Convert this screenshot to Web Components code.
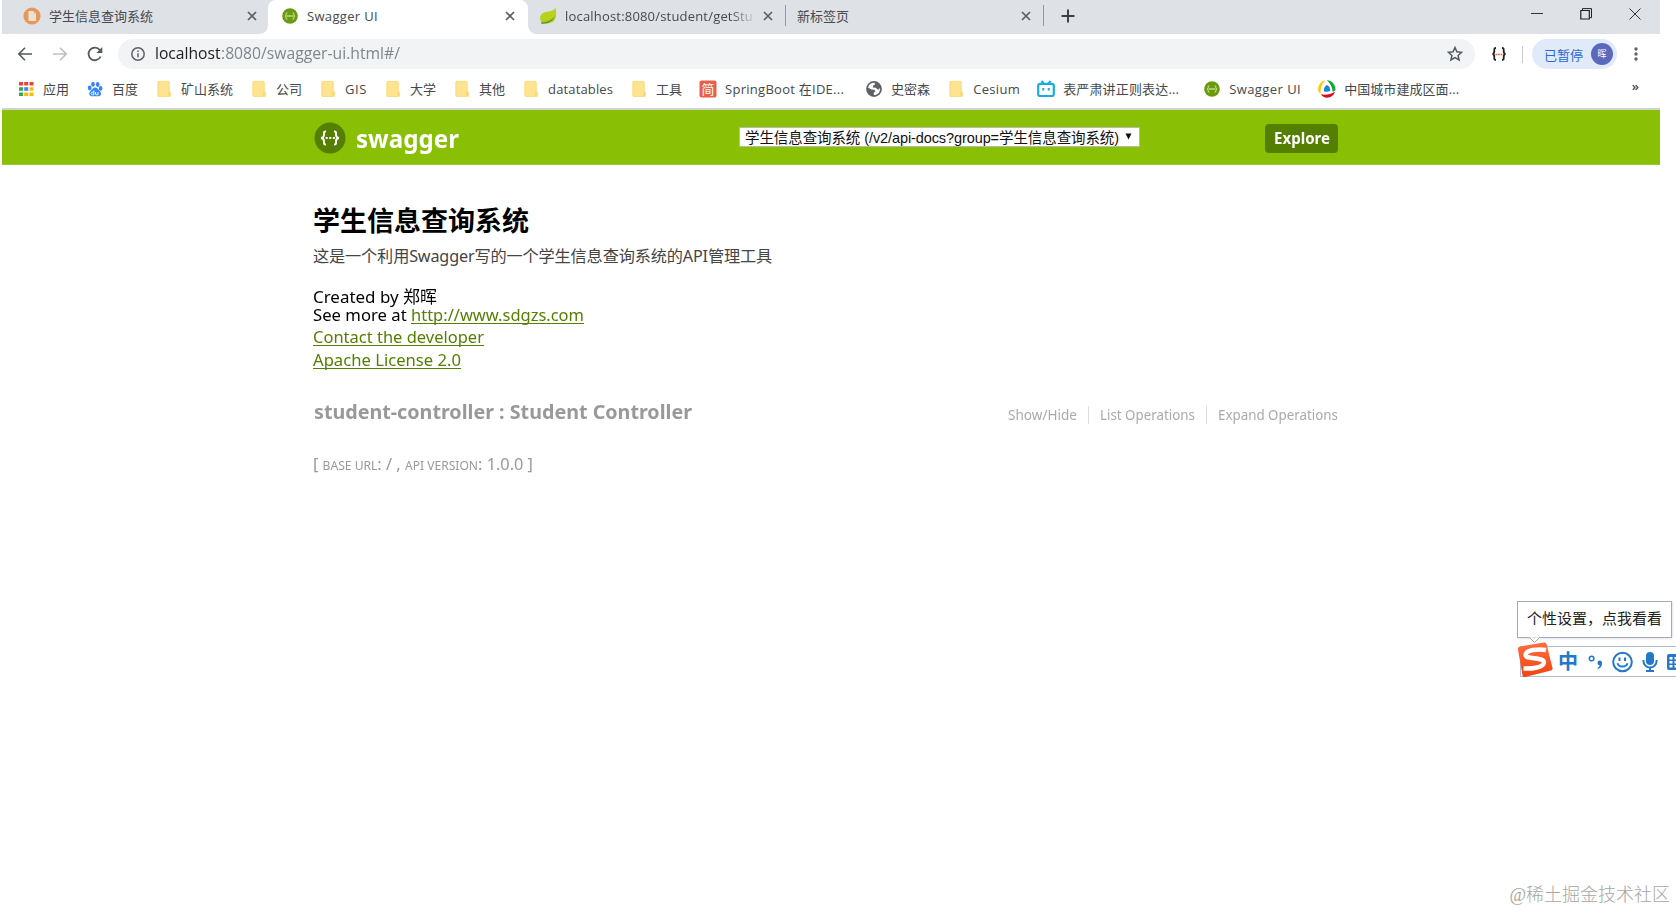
<!DOCTYPE html>
<html lang="zh-CN">
<head>
<meta charset="utf-8">
<title>Swagger UI</title>
<style>
  html, body { margin: 0; padding: 0; background: #fff; }
  body {
    width: 1676px; height: 912px; overflow: hidden; position: relative;
    font-family: "Open Sans", "Noto Sans CJK SC", sans-serif;
  }
  .window { width: 1658px; margin-left: 2px; }
</style>
</head>
<body>
<div class="window">
  <browser-tabs>
    <browser-tab style="width:266px" pad="21" label="学生信息查询系统" fit="104" icon="doc"></browser-tab>
    <browser-tab style="width:260px" pad="13" label="Swagger UI" fit="71" icon="swagger" active></browser-tab>
    <browser-tab style="width:258px" pad="11" label="localhost:8080/student/getStu" fit="188" icon="leaf" clipped></browser-tab>
    <browser-tab style="width:258px" pad="11" label="新标签页" fit="52"></browser-tab>
  </browser-tabs>
  <browser-toolbar></browser-toolbar>
  <bookmarks-bar>
    <bookmark-item icon="apps">应用</bookmark-item>
    <bookmark-item icon="baidu">百度</bookmark-item>
    <bookmark-item icon="folder">矿山系统</bookmark-item>
    <bookmark-item icon="folder">公司</bookmark-item>
    <bookmark-item icon="folder" fit="22">GIS</bookmark-item>
    <bookmark-item icon="folder">大学</bookmark-item>
    <bookmark-item icon="folder">其他</bookmark-item>
    <bookmark-item icon="folder" fit="65">datatables</bookmark-item>
    <bookmark-item icon="folder">工具</bookmark-item>
    <bookmark-item icon="jian" fit="119" style="margin-right:4px">SpringBoot 在IDE...</bookmark-item>
    <bookmark-item icon="globe">史密森</bookmark-item>
    <bookmark-item icon="folder" fit="47">Cesium</bookmark-item>
    <bookmark-item icon="bili" fit="116" style="margin-right:7px">表严肃讲正则表达...</bookmark-item>
    <bookmark-item icon="swagger" fit="72">Swagger UI</bookmark-item>
    <bookmark-item icon="ring" fit="115">中国城市建成区面...</bookmark-item>
  </bookmarks-bar>
  <swagger-header></swagger-header>
  <swagger-info></swagger-info>
  <swagger-resource></swagger-resource>
</div>
<ime-bar></ime-bar>
<page-watermark>@稀土掘金技术社区</page-watermark>

<script>
const ICONS = {
  doc: `<svg viewBox="0 0 18 18"><circle cx="9" cy="9" r="8.6" fill="#e8965a"/><path d="M5.500 4h5l2.500 2.500v7.500H5.500z" fill="#e6e3d3"/><path d="M10.500 4v2.500H13" fill="#c6c8b4"/></svg>`,
  swagger: `<svg viewBox="0 0 18 18"><circle cx="9" cy="9" r="7.800" fill="#6a9b0c"/><path d="M6.300 5.800c-1.200 0-1.100.6-1.100 1.500S5 8.900 4 9c1 .1 1.200.8 1.200 1.700s-.1 1.500 1.100 1.500M11.700 5.800c1.200 0 1.100.6 1.100 1.500S13 8.900 14 9c-1 .1-1.200.8-1.200 1.700s.1 1.500-1.100 1.500" fill="none" stroke="#e9f2d6" stroke-width=".9"/><path d="M6.300 9h5.400" stroke="#e6efd2" stroke-width="1.300" stroke-dasharray="1.400 .6"/></svg>`,
  leaf: `<svg viewBox="0 0 18 18"><path d="M16.500 1c1 4 1.200 8.500-1.500 11.500-3 3.200-8 3.800-12.500 3C0 11 1 7 5 5.500 9 4.200 14 5 16.500 1z" fill="#b9d11b"/><path d="M16.800 7c-2 4.500-7 6.500-13 6.700l-1.500 2.800c6 .5 11 0 13.300-3.500 1.200-1.800 1.400-4 1.200-6z" fill="#a9c91d"/><path d="M2 15.500c5 .3 10-1.500 13-5.500-1.800 4.500-6 6.800-12.500 6.700z" fill="#4b8f2a"/></svg>`,
  apps: `<svg viewBox="0 0 18 18"><path d="M2 2h4v3.500H2zM7.200 2h4v3.500h-4zM12.500 2h4v3.500h-4z" fill="#ea4335"/><path d="M2 7.200h4v3.600H2zM2 12.500h4V16H2z" fill="#34a853"/><path d="M7.200 7.200h4v3.600h-4z" fill="#4285f4"/><path d="M12.500 7.200h4v3.600h-4zM12.500 12.500h4V16h-4zM7.200 12.500h4V16h-4z" fill="#fbbc05"/></svg>`,
  baidu: `<svg viewBox="0 0 18 18" fill="#3385ff"><ellipse cx="3.700" cy="8" rx="1.900" ry="2.400"/><ellipse cx="7" cy="4.300" rx="1.800" ry="2.400"/><ellipse cx="11.700" cy="4.500" rx="1.800" ry="2.400"/><ellipse cx="14.600" cy="8.400" rx="1.800" ry="2.300"/><path d="M9 7.500c-2 0-2.700 2-4.200 3.200-3 2.500-1.300 6 2 5.600 1.500-.2 3-.2 4.500 0 4 .5 4.800-3.300 2.400-5.400C12 9.500 11.200 7.500 9 7.500z"/><path d="M7.800 10.500v4.300H6.500c-1.900 0-1.900-2.600 0-2.600h1.300M9.600 12v2c0 .6.300.8.900.8h1.500V12" fill="none" stroke="#fff" stroke-width="1"/></svg>`,
  folder: `<svg viewBox="0 0 18 18"><path d="M3.500 1h10a1 1 0 0 1 1 1v9.500h.5a.7.700 0 0 1 .7.700v3.600a1 1 0 0 1-1 1H3.500a1 1 0 0 1-1-1V2a1 1 0 0 1 1-1z" fill="#fee391"/><path d="M14.500 11.500h-1.300v3.200a2 2 0 0 1-1.700 2h3.200a1 1 0 0 0 1-1v-3.500c0-.5-.3-.7-1.200-.7z" fill="#f9d978"/><path d="M14.200 2v9.300M3 1.400h11M2.900 2v14M3 16.500h9" fill="none" stroke="#fbd976" stroke-width=".7"/></svg>`,
  jian: `<svg viewBox="0 0 18 18"><rect x=".5" y=".5" width="17" height="17" rx="2" fill="#e7614a"/><text x="9" y="13.800" text-anchor="middle" font-size="13" fill="#fff" font-family="Noto Sans CJK SC, sans-serif">简</text></svg>`,
  globe: `<svg viewBox="0 0 18 18"><circle cx="9" cy="9" r="7.900" fill="#5f6368"/><path d="M3 7.500C4 4 6.500 2.700 9.500 2.700L10 4.500 8 5.800l-.2 1.700 3 .2 1.500 1.500 1.700.3.800-1.800c.9 4-1.800 7.300-5.800 7.400l-.3-2 1.700-1.800-1-1.500-3-.2z" fill="#fff"/></svg>`,
  bili: `<svg viewBox="0 0 18 18"><path d="M4.500 1l2.200 3M13.500 1l-2.200 3" stroke="#19ace4" stroke-width="2.200"/><rect x="1.200" y="3.800" width="15.600" height="12.200" rx="2" fill="#fff" stroke="#19ace4" stroke-width="2.200"/><path d="M6.300 8v2.400M11.700 8v2.400" stroke="#19ace4" stroke-width="2"/></svg>`,
  ring: `<svg viewBox="0 0 18 18"><circle cx="9" cy="9" r="7" fill="#fff"/><path d="M7.500.3C2.500 1-.8 6.500.4 11.500l2.300 2.200C2.200 8 4 4 7.500.3z" fill="#fccb00"/><path d="M8.800.2c5.500 0 9.200 5 8.600 10.300l-2.700 1.500C14.500 7.500 12.500 3.500 8.800.2z" fill="#18a638"/><path d="M2.800 14.300c4.500 1 9.700.3 14.200-2.500-2 6.500-10.500 8-14.200 2.500z" fill="#e60019"/><path d="M9 5c2.300.8 3.400 3.200 3.200 6-1.800 1-4.500 1-6.400.2C5.700 8.500 6.700 6 9 5z" fill="#1786d9"/></svg>`,
}

/** Shared base: clones what render() returns into the shadow root. */
class BaseElement extends HTMLElement {
  constructor() {
    super()
    this.attachShadow({ mode: 'open' })
  }
  connectedCallback() {
    const template = document.createElement('template')
    template.innerHTML = this.render()
    this.shadowRoot.replaceChildren(template.content.cloneNode(true))
  }
}

/**
 * A run of text made `width` pixels wide: by tracking,
 * or by narrowing the glyphs when `squeeze` is set.
 */
class FitText extends BaseElement {
  render() {
    return `<style>
      :host { display: inline-block; white-space: nowrap; }
      span { display: inline-block; transform-origin: 0 50%; }
      :host([underline]) span { text-decoration: underline; text-underline-offset: 2px; text-decoration-skip-ink: none; }
    </style><span><slot></slot></span>`
  }
  connectedCallback() {
    super.connectedCallback()
    const width = parseFloat(this.getAttribute('width'))
    if (!width) return
    const span = this.shadowRoot.querySelector('span')
    const natural = span.getBoundingClientRect().width
    if (this.hasAttribute('squeeze')) {
      this.style.width = width + 'px'
      span.style.transform = `scaleX(${width / natural})`
    } else {
      span.style.letterSpacing = (width - natural) / this.textContent.length + 'px'
    }
  }
}
customElements.define('fit-text', FitText)

class BrowserTabs extends BaseElement {
  render() {
    return `<style>
      :host { display: flex; height: 34px; background: #dee1e6; color: #45494d; }
      .new { width: 47px; display: grid; place-items: center; }
      .controls { margin-left: auto; display: flex; align-items: center; padding: 0 19px 6px 0; gap: 37px; }
      svg { display: block; }
    </style>
    <slot></slot>
    <span class="new"><svg width="14" height="14" style="margin-top:-2px"><path d="M7 .5v13M.5 7h13" stroke="#3c4043" stroke-width="2"/></svg></span>
    <span class="controls">
      <svg width="12" height="12"><path d="M0 5.500h12" stroke="#333"/></svg>
      <svg width="12" height="12" fill="none" stroke="#222"><path d="M.8 2.500h8.500v8.500H.8z" stroke-width="1.200"/><path d="M2.500 2V.600h9v9H10"/></svg>
      <svg width="12" height="12"><path d="M.5.500l11 11M11.500.500l-11 11" stroke="#333"/></svg>
    </span>`
  }
}
customElements.define('browser-tabs', BrowserTabs)

class BrowserTab extends BaseElement {
  render() {
    const icon = this.getAttribute('icon')
    const clipped = this.hasAttribute('clipped')
    return `<style>
      :host { display: flex; align-items: center; box-sizing: border-box; height: 34px; font-size: 13px;
        padding: 0 11px 3px ${this.getAttribute('pad')}px; position: relative; flex: none; }
      :host([active]) { background: #fff; border-radius: 8px 8px 0 0; padding-right: 13px; }
      :host([active])::before, :host([active])::after {
        content: ""; position: absolute; bottom: 0; width: 8px; height: 8px; }
      :host([active])::before { right: 100%; background: radial-gradient(circle at 0 0, #dee1e6 7.500px, #fff 8px); }
      :host([active])::after { left: 100%; background: radial-gradient(circle at 100% 0, #dee1e6 7.500px, #fff 8px); }
      .icon { width: 18px; height: 18px; margin-right: 8px; }
      .label { flex: 1; overflow: hidden; line-height: 20px; }
      .clipped { -webkit-mask-image: linear-gradient(90deg, #000 165px, transparent 192px); }
      .rule { width: 1px; height: 21px; background: #95989c; margin-left: 12px; margin-right: -11px; }
      svg { display: block; }
    </style>
    ${icon ? `<span class="icon">${ICONS[icon]}</span>` : ''}
    <span class="label ${clipped ? 'clipped' : ''}"><fit-text width="${this.getAttribute('fit')}">${this.getAttribute('label')}</fit-text></span>
    <svg width="10" height="10"><path d="M1 1l8 8M9 1l-8 8" stroke="#5a5e62" stroke-width="1.700"/></svg>
    ${clipped || !icon ? '<span class="rule"></span>' : ''}`
  }
}
customElements.define('browser-tab', BrowserTab)

class BrowserToolbar extends BaseElement {
  render() {
    return `<style>
      :host { display: flex; align-items: center; height: 40px; }
      svg { display: block; flex: none; }
      .nav { display: flex; gap: 19px; padding-left: 15px; width: 101px; }
      .omnibox { width: 1357px; height: 30px; border-radius: 15px; background: #f1f3f4;
        display: flex; align-items: center; box-sizing: border-box; padding: 0 12px 0 12px; }
      .url { font-size: 16px; line-height: 27px; margin: -1px 0 0 9px; flex: 1; color: #80868b; display: flex; }
      .host { color: #202124; }
      .ext { margin-left: 16px; }
      .rule { width: 1px; height: 17px; background: #c9ccd0; margin: 0 9px 0 15px; }
      .profile { height: 30px; width: 85px; border-radius: 15px; background: #e1eaf9; box-sizing: border-box;
        display: flex; align-items: center; justify-content: space-between; padding: 0 4px 0 12px; color: #2a67cf; font-size: 13px; }
      .avatar { width: 22px; height: 22px; border-radius: 50%; background: #5b69bd; color: #fff;
        font-size: 9px; line-height: 22px; text-align: center; }
      .menu { margin-left: 16px; }
    </style>
    <span class="nav">
      <svg width="16" height="16" fill="none" stroke="#55595d" stroke-width="1.600"><path d="M15 8H2M8 1.800L1.800 8 8 14.200"/></svg>
      <svg width="16" height="16" fill="none" stroke="#bcbec1" stroke-width="1.600"><path d="M1 8h13M8 1.800L14.200 8 8 14.200"/></svg>
      <svg width="16" height="16" fill="none" stroke="#55595d" stroke-width="1.800"><path d="M13.600 10.500A6.300 6.300 0 1 1 12.800 4"/><path d="M15.300 1v6H9.300z" fill="#55595d" stroke="none"/></svg>
    </span>
    <span class="omnibox">
      <svg width="16" height="16"><circle cx="8" cy="8" r="6.200" fill="none" stroke="#5f6368" stroke-width="1.500"/><path d="M8 7.200v4M8 4.500v1.500" stroke="#5f6368" stroke-width="1.500"/></svg>
      <span class="url"><fit-text class="host" width="65.500" squeeze>localhost</fit-text><fit-text width="179" squeeze>:8080/swagger-ui.html#/</fit-text></span>
      <svg width="16" height="16" fill="none" stroke="#55595d" stroke-width="1.500"><path d="M8 1.500l1.900 4.300 4.700.5-3.500 3.100 1 4.600L8 11.600 3.900 14l1-4.600L1.400 6.300l4.700-.5z"/></svg>
    </span>
    <svg class="ext" width="16" height="14" fill="none"><path d="M5 1C3 1 3.300 2 3.300 4S3 6.800 1.500 7c1.500.2 1.800 1 1.800 3S3 13 5 13M11 1c2 0 1.700 1 1.700 3s.3 2.800 1.800 3c-1.500.2-1.800 1-1.800 3s.3 3-1.700 3" stroke="#222" stroke-width="1.800"/><path d="M4.500 7.500h7" stroke="#f0592b" stroke-width="1.500" stroke-dasharray="1.700 .9"/></svg>
    <span class="rule"></span>
    <span class="profile"><span>已暂停</span><span class="avatar">晖</span></span>
    <svg class="menu" width="6" height="16" fill="#5f6368"><circle cx="3" cy="3" r="1.700"/><circle cx="3" cy="8" r="1.700"/><circle cx="3" cy="13" r="1.700"/></svg>`
  }
}
customElements.define('browser-toolbar', BrowserToolbar)

class BookmarksBar extends BaseElement {
  render() {
    return `<style>
      :host { display: flex; gap: 17px; align-items: center; height: 36px; padding: 0 0 5px 15px; color: #45494d;
        border-bottom: 2px solid #cfd1d3; font-size: 13px; box-sizing: border-box; }
      .more { margin: -5px 21px 0 auto; font-size: 13px; font-weight: 600; }
    </style><slot></slot><span class="more">»</span>`
  }
}
customElements.define('bookmarks-bar', BookmarksBar)

class BookmarkItem extends BaseElement {
  render() {
    return `<style>
      :host { display: flex; align-items: center; gap: 8px; flex: none; line-height: 20px; }
      .icon { width: 18px; height: 18px; }
      svg { display: block; overflow: visible; }
    </style>
    <span class="icon">${ICONS[this.getAttribute('icon')]}</span>
    <fit-text width="${this.getAttribute('fit') || ''}">${this.textContent}</fit-text>`
  }
}
customElements.define('bookmark-item', BookmarkItem)

class SwaggerHeader extends BaseElement {
  render() {
    return `<style>
      :host { display: flex; align-items: center; height: 55px; background: #89bf04; box-sizing: border-box;
        border-bottom: 1px solid #9ac92b; padding: 1px 0 0 312px; font-family: "Noto Sans", "Noto Sans CJK SC", sans-serif; }
      .logo { display: block; margin-top: 1px; }
      .name { font-size: 25.500px; font-weight: 700; color: #fff; line-height: 34px; margin-left: 10px; width: 383px; }
      .select { width: 401px; height: 20px; box-sizing: border-box; border: 1px solid #b5bda5; background: #fff; color: #111;
        font: 14.500px/21px "Liberation Sans", "Noto Sans CJK SC", sans-serif; display: flex; justify-content: space-between;
        padding: 0 6px 0 5px; overflow: hidden; margin-top: -2px; }
      .arrow { margin-top: 5px; }
      .explore { margin-left: 125px; width: 73px; height: 29px; border-radius: 4px; background: #547f00; color: #fff;
        font-weight: 700; font-size: 15.500px; line-height: 28px; text-align: center; margin-top: 2px; }
    </style>
    <svg class="logo" width="32" height="32"><circle cx="16" cy="16" r="15.500" fill="#547f00"/><path d="M12 9.500c-2.600 0-2 1.200-2 3.200S9.500 15.800 7 16c2.500.2 3 1.300 3 3.300s-.6 3.200 2 3.200M20 9.500c2.600 0 2 1.200 2 3.200s.5 3.100 3 3.300c-2.500.2-3 1.300-3 3.300s.6 3.200-2 3.200" fill="none" stroke="#fff" stroke-width="1.900"/><path d="M11.700 16h9.500" stroke="#fff" stroke-width="2" stroke-dasharray="2 1.600"/></svg>
    <span class="name"><fit-text width="103" squeeze>swagger</fit-text></span>
    <span class="select"><fit-text width="374">学生信息查询系统 (/v2/api-docs?group=学生信息查询系统)</fit-text>
      <svg class="arrow" width="8" height="7"><path d="M.5.500h6L3.500 6.500z" fill="#111"/></svg></span>
    <span class="explore"><fit-text width="56" squeeze>Explore</fit-text></span>`
  }
}
customElements.define('swagger-header', SwaggerHeader)

class SwaggerInfo extends BaseElement {
  render() {
    return `<style>
      :host { display: block; padding: 36px 0 0 311px; color: #000; font: 17px/17px "Noto Sans", "Noto Sans CJK SC", sans-serif; }
      h1 { margin: 0; font-size: 27px; line-height: 40px; font-weight: 700; }
      .desc { font-size: 16.200px; line-height: 29px; color: #444; margin: 1px 0 18px; }
      .row { height: 17px; display: flex; }
      .created { margin-top: -1px; margin-bottom: 1px; }
      .more { margin-bottom: 3px; }
      .tall { height: 22.500px; line-height: 22.500px; }
      a { color: #547f00; }
    </style>
    <h1>学生信息查询系统</h1>
    <div class="desc"><fit-text width="459">这是一个利用Swagger写的一个学生信息查询系统的API管理工具</fit-text></div>
    <div class="row created"><fit-text width="124" squeeze>Created by 郑晖</fit-text></div>
    <div class="row more"><fit-text width="98" squeeze>See more at&nbsp;</fit-text><a><fit-text width="173" squeeze underline>http://www.sdgzs.com</fit-text></a></div>
    <div class="row tall"><a><fit-text width="171" squeeze underline>Contact the developer</fit-text></a></div>
    <div class="row tall"><a><fit-text width="148" squeeze underline>Apache License 2.0</fit-text></a></div>`
  }
}
customElements.define('swagger-info', SwaggerInfo)

class SwaggerResource extends BaseElement {
  render() {
    return `<style>
      :host { display: block; padding: 29px 0 0 312px; width: 1024px; font-family: "Noto Sans", "Noto Sans CJK SC", sans-serif; color: #999; }
      .heading { display: flex; justify-content: space-between; height: 30px; }
      h2 { margin: 0; font-size: 19.800px; line-height: 24px; font-weight: 700; }
      ul { display: flex; list-style: none; margin: 6px 0 0; padding: 0; font-size: 14.300px; line-height: 18px; height: 18px; color: #aaa; }
      li + li { border-left: 1px solid #ddd; margin-left: 11px; padding-left: 11px; }
      .base { font-size: 17px; line-height: 24px; margin: 22px 0 0 -1px; }
      .base small { font-size: 12.600px; text-transform: uppercase; }
    </style>
    <div class="heading">
      <h2><fit-text width="378" squeeze>student-controller : Student Controller</fit-text></h2>
      <ul>
        <li><fit-text width="69" squeeze>Show/Hide</fit-text></li>
        <li><fit-text width="95" squeeze>List Operations</fit-text></li>
        <li><fit-text width="120" squeeze>Expand Operations</fit-text></li>
      </ul>
    </div>
    <div class="base"><fit-text width="220" squeeze>[ <small>base url</small>: / , <small>api version</small>: 1.0.0 ]</fit-text></div>`
  }
}
customElements.define('swagger-resource', SwaggerResource)

class ImeBar extends BaseElement {
  render() {
    return `<style>
      :host { position: absolute; left: 1517px; top: 601px; width: 159px; overflow: hidden; height: 80px; }
      .tip { box-sizing: border-box; width: 155px; height: 37px; border: 1px solid #a3acb8; background: #fff; color: #222;
        font-size: 15px; line-height: 33px; padding-left: 9px; box-shadow: 0 0 3px #ccd; }
      .beak { position: absolute; left: 12px; top: 36px; }
      .bar { display: flex; align-items: center; box-sizing: border-box; width: 170px; height: 31px; margin: 8px 0 0 3px;
        border: 1px solid #b4b9cb; background: #fff; padding-left: 37px; }
      .zh { color: #2478c8; font-size: 20px; font-weight: 700; line-height: 28px; width: 20px; margin-right: 10px; }
      .logo { position: absolute; left: 0; top: 40px; }
      svg { display: block; flex: none; }
    </style>
    <div class="tip">个性设置，点我看看</div>
    <svg class="beak" width="11" height="6"><path d="M.5.500L5.500 5.500 10.500.500" fill="#fff" stroke="#a3acb8"/><path d="M1 0h9" stroke="#fff"/></svg>
    <div class="bar">
      <span class="zh">中</span>
      <svg width="16" height="18" style="margin-right:8px"><circle cx="3.600" cy="5.500" r="2.300" fill="none" stroke="#2478c8" stroke-width="1.500"/><path d="M9.500 9.800a2.300 2.300 0 0 1 4.600.2c0 3-1.300 5-4.200 6l-.5-1c1.500-.8 2.200-1.700 2.200-2.700-1.200.1-2.100-.8-2.100-2.500z" fill="#2478c8"/></svg>
      <svg width="22" height="22" fill="none" stroke="#2478c8" stroke-width="2"><circle cx="10.500" cy="11" r="9.300"/><path d="M7.500 6.500v3.500M13 6.500v3.500M5.500 12.200c1.500 4.500 8.500 4.500 10 0"/></svg>
      <svg width="16" height="20" style="margin-left:8px"><rect x="4" y="0" width="8" height="13" rx="4" fill="#2478c8"/><path d="M1.300 8c0 10 13.400 10 13.400 0M8 15.500V19M4 19h8" fill="none" stroke="#2478c8" stroke-width="2"/></svg>
      <svg width="20" height="16" style="margin-left:9px"><rect x="0" y="0" width="22" height="16" rx="2" fill="#2478c8"/><path d="M2.500 3h3v2.500h-3zM7.500 3h3v2.500h-3zM2.500 7h3v2.500h-3zM7.500 7h3v2.500h-3zM2.500 11h3v2.500h-3zM7.500 11h8v2.500h-8z" fill="#fff"/></svg>
    </div>
    <svg class="logo" width="37" height="37" viewBox="0 0 37 37">
      <defs><linearGradient id="g" x2="0" y2="1"><stop stop-color="#ff6e40"/><stop offset="1" stop-color="#f04312"/></linearGradient></defs>
      <path d="M3 5.500L27 1.500q2-.4 2.500 1.500l6 24q.5 2-1.500 2.500L8 36q-2 .4-2.500-1.500L1 8.500q-.3-2.500 2-3z" fill="url(#g)"/>
      <path d="M29 9C21 7.500 9 9 8.500 14c-.3 4.500 18 2 18.300 7 .2 5.500-12 7-20.300 6.500" fill="none" stroke="#fff" stroke-width="4.500"/>
    </svg>`
  }
}
customElements.define('ime-bar', ImeBar)

class PageWatermark extends BaseElement {
  render() {
    return `<style>
      :host { position: absolute; right: 6px; bottom: 4px; font: 300 18px/26px "Liberation Serif", "Noto Sans CJK SC", serif; color: #a6a6a6; }
    </style><fit-text width="160"><slot></slot></fit-text>`
  }
}
customElements.define('page-watermark', PageWatermark)
</script>
</body>
</html>
